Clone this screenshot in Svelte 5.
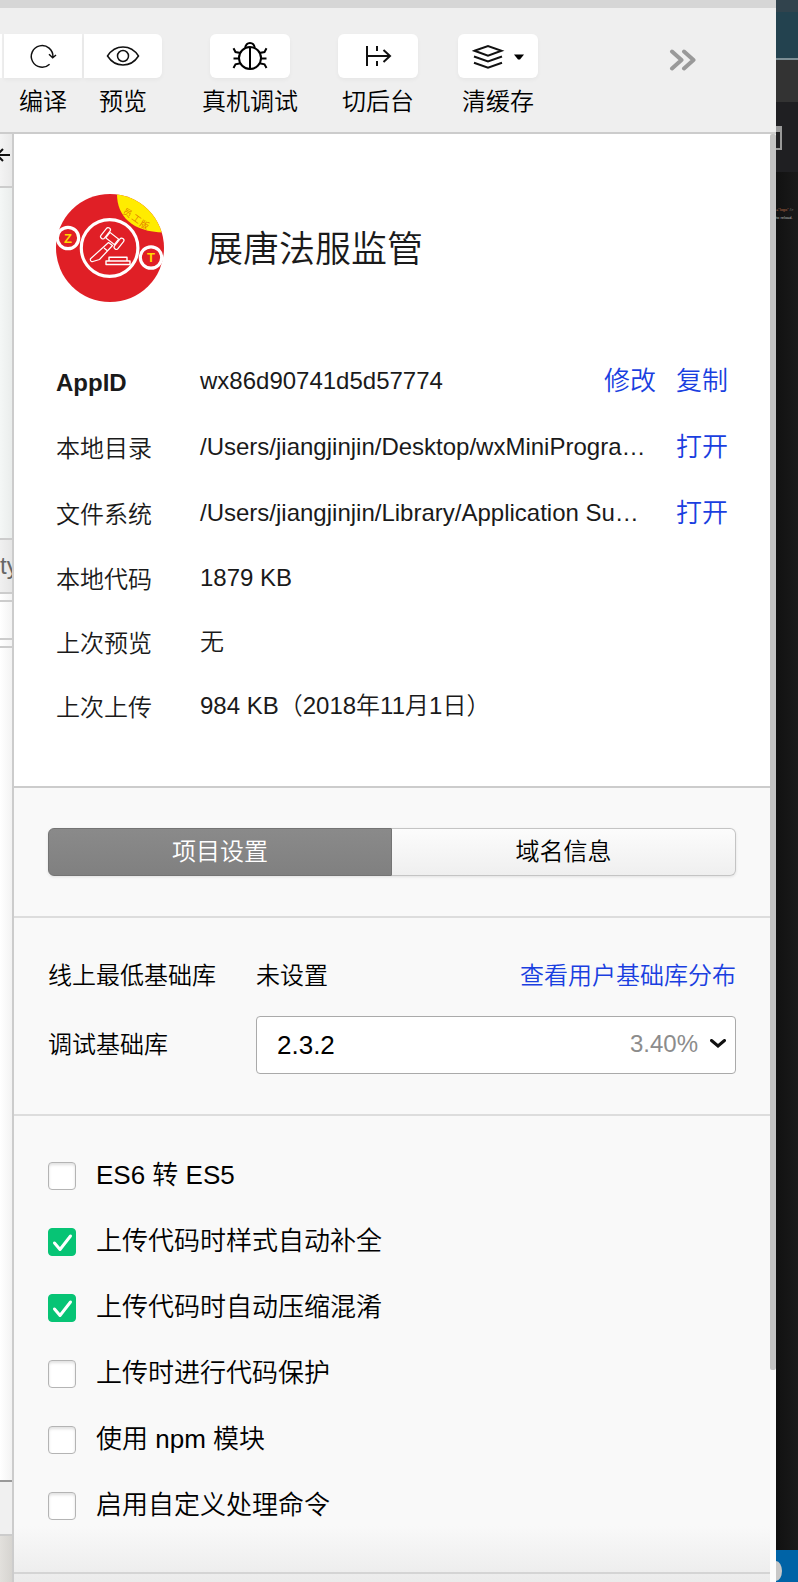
<script>
  let tab = $state('project');
  let library = $state('2.3.2');

  const info = [
    { label: 'AppID', value: 'wx86d90741d5d57774', actions: ['修改', '复制'], strong: true },
    { label: '本地目录', value: '/Users/jiangjinjin/Desktop/wxMiniProgra…', actions: ['打开'] },
    { label: '文件系统', value: '/Users/jiangjinjin/Library/Application Su…', actions: ['打开'] },
    { label: '本地代码', value: '1879 KB', actions: [] },
    { label: '上次预览', value: '无', actions: [] },
    { label: '上次上传', value: '984 KB（2018年11月1日）', actions: [] }
  ];

  let options = $state([
    { label: 'ES6 转 ES5', checked: false },
    { label: '上传代码时样式自动补全', checked: true },
    { label: '上传代码时自动压缩混淆', checked: true },
    { label: '上传时进行代码保护', checked: false },
    { label: '使用 npm 模块', checked: false },
    { label: '启用自定义处理命令', checked: false }
  ]);
</script>

<div class="screen">
  <div class="window">
    <header class="toolbar">
      <div class="sliver"></div>
      <div class="tool narrow">
        <button class="first" aria-labelledby="t-compile">
          <svg width="28" height="28" viewBox="0 0 28 28"><path d="M20.6 22.2A10.8 10.8 0 1 1 23.9 15M20 12.2l3.7 3.6 3.3-2.8" /></svg>
        </button>
        <span id="t-compile">编译</span>
      </div>
      <div class="tool narrow joined">
        <button class="last" aria-labelledby="t-preview">
          <svg width="34" height="24" viewBox="0 0 34 24"><path d="M1.5 12C6 5 11.500 3 17 3s11 2 15.500 9C28 19 22.500 21 17 21S6 19 1.500 12z" /><circle cx="17" cy="12" r="5.500" /></svg>
        </button>
        <span id="t-preview">预览</span>
      </div>
      <div class="tool gap-wide">
        <button aria-labelledby="t-debug">
          <svg class="bug" width="36" height="32" viewBox="0 0 36 32"><circle cx="18" cy="18" r="11" /><path d="M18 7v22M13.300 8.500C13.300 1 22.700 1 22.700 8.500M1.500 8.300l2 3.700L8.500 13M34.500 8.300l-2 3.700-5 1M1.500 18.500H7M29 18.500h5.500M1.500 28l2-3.700 5-1M34.500 28l-2-3.700-5-1" /></svg>
        </button>
        <span id="t-debug">真机调试</span>
      </div>
      <div class="tool gap-wide">
        <button aria-labelledby="t-background">
          <svg class="bold" width="28" height="24" viewBox="0 0 28 24"><path d="M3 2v20M3 12h23M13 2v5M13 17v5M19.500 6l6.500 6-6.500 6" /></svg>
        </button>
        <span id="t-background">切后台</span>
      </div>
      <div class="tool gap-mid">
        <button aria-labelledby="t-cache">
          <svg class="bold" width="52" height="28" viewBox="0 0 52 28"><path d="M2.500 8.800L16 4l13.500 4.800L16 13.800zM2 14.500l14 5 14-5M2 20.800l14 5 14-5" /><path class="solid" d="M42 12.500h10l-4 5h-2z" /></svg>
        </button>
        <span id="t-cache">清缓存</span>
      </div>
      <button class="more" aria-label="更多">
        <svg width="28" height="22" viewBox="0 0 28 22"><path d="M3 2.500L12.500 11 3 19.500M15 2.500L24.500 11 15 19.500" /></svg>
      </button>
    </header>

    <div class="body">
      <aside class="behind">
        <div class="b-back">
          <svg width="10" height="14" viewBox="0 0 10 14"><path d="M10 7H-3M3 1l-6 6 6 6" /></svg>
        </div>
        <div class="b-preview"></div>
        <div class="b-tab">ty</div>
        <div class="b-thin"></div>
        <div class="b-input"></div>
        <div class="b-thin"></div>
        <div class="b-list"></div>
        <div class="b-row"></div>
        <div class="b-foot"></div>
      </aside>

      <main class="panel">
        <section class="info">
          <div class="app">
            <svg class="logo" width="108" height="108" viewBox="0 0 108 108" aria-hidden="true">
              <defs><clipPath id="disc"><circle cx="54" cy="54" r="54" /></clipPath></defs>
              <g clip-path="url(#disc)">
                <rect width="108" height="108" fill="#e01f26" />
                <path d="M61 0C61 22 76 38 108 38.500V0z" fill="#ffec00" />
              </g>
              <g class="badge">
                <text transform="translate(71.500 19) rotate(28)" y="3">员</text>
                <text transform="translate(80.500 25) rotate(36)" y="3">工</text>
                <text transform="translate(88.500 31) rotate(28)" y="3">版</text>
              </g>
              <g fill="#e01f26" stroke="#fff" stroke-width="3.200">
                <circle cx="53.600" cy="54" r="28.300" />
                <circle cx="12" cy="44" r="10.700" /><circle cx="95" cy="63.500" r="10.700" />
              </g>
              <g class="letter"><text x="12" y="48.500">Z</text><text x="95" y="68">T</text></g>
              <g fill="none" stroke="#fff" stroke-width="1.200" stroke-linejoin="round">
                <path d="M52.500 48.500l4 3L43.500 65.500 36 67.800q-2.200-1-1.500-3zM48 54l4 3.200" />
                <rect x="-5.500" y="-3.500" width="11" height="7" transform="translate(56.200 44.500) rotate(38)" />
                <rect x="-2.200" y="-6.500" width="4.400" height="13" rx="2" transform="translate(49.500 39.300) rotate(38)" />
                <rect x="-2.200" y="-6.500" width="4.400" height="13" rx="2" transform="translate(63 49.800) rotate(38)" />
                <path d="M50 70.500h24V67H50zM53 67v-3.800h18V67" stroke-width="1.400" />
              </g>
            </svg>
            <h1>展唐法服监管</h1>
          </div>
          <dl>
            {#each info as row}
              <div class="row" class:linked={row.actions.length}>
                <dt class:strong={row.strong}>{row.label}</dt>
                <dd>{row.value}</dd>
                {#if row.actions.length}
                  <div class="actions">
                    {#each row.actions as action}<a href="#{action}">{action}</a>{/each}
                  </div>
                {/if}
              </div>
            {/each}
          </dl>
        </section>

        <section class="tabs">
          <div class="segmented" role="tablist">
            <button role="tab" aria-selected={tab === 'project'} class:active={tab === 'project'} onclick={() => (tab = 'project')}>项目设置</button>
            <button role="tab" aria-selected={tab === 'domain'} class:active={tab === 'domain'} onclick={() => (tab = 'domain')}>域名信息</button>
          </div>
        </section>

        <section class="library">
          <div class="field first-field">
            <span class="name">线上最低基础库</span>
            <span class="current">未设置</span>
            <a href="#stats">查看用户基础库分布</a>
          </div>
          <div class="field">
            <label class="name" for="lib">调试基础库</label>
            <div class="select">
              <select id="lib" bind:value={library}><option>2.3.2</option></select>
              <span class="share">3.40%
                <svg width="16" height="10" viewBox="0 0 16 10"><path d="M1.500 1.500L8 7l6.500-5.500" /></svg>
              </span>
            </div>
          </div>
        </section>

        <section class="options">
          {#each options as option}
            <label><input type="checkbox" bind:checked={option.checked} /><span>{option.label}</span></label>
          {/each}
        </section>
        <section class="rest"></section>
      </main>

      <div class="scrollbar"><div class="thumb"></div></div>
    </div>
  </div>

  <aside class="editor">
    <div class="e-top"></div>
    <div class="e-title"></div>
    <div class="e-bar"></div>
    <div class="e-tabs"><div class="e-icon"></div></div>
    <div class="e-code"><span><i>="logo"</i> /&gt;</span><span class="plain">to reload.</span></div>
    <div class="e-status"><div class="e-dot"></div></div>
  </aside>
</div>

<style>
  :global(body) { margin: 0; }
  .screen {
    display: flex;
    min-height: 100vh;
    font-family: "Liberation Sans", "Noto Sans CJK SC", sans-serif;
    font-size: 24px;
    line-height: 36px;
    font-weight: 350;
    color: #000;
    background: #f9f9f9;
  }
  .screen *, .screen *::before { box-sizing: border-box; }
  button, select, input { font: inherit; color: inherit; margin: 0; }
  button { padding: 0; border: 0; cursor: pointer; }
  a { color: #1a3fe0; text-decoration: none; }
  svg { display: block; fill: none; stroke: #111; stroke-width: 1.5; }

  .window { flex: 1; min-width: 0; display: flex; flex-direction: column; }
  .toolbar {
    display: flex;
    align-items: flex-start;
    height: 134px;
    padding-top: 26px;
    padding-right: 79px;
    background: #efefef;
    border-top: 8px solid #d6d6d6;
    border-bottom: 2px solid #ccc;
  }
  .sliver { width: 2px; height: 44px; margin-right: 2px; background: #fff; }
  .tool { display: flex; flex-direction: column; align-items: center; gap: 6px; width: 80px; white-space: nowrap; }
  .tool button {
    display: flex;
    align-items: center;
    justify-content: center;
    width: 100%;
    height: 44px;
    border-radius: 6px;
    background: #fff;
    box-shadow: 0 2px 4px rgba(0, 0, 0, 0.04);
  }
  .tool.narrow { width: 78px; }
  .tool button.first { border-radius: 0; }
  .tool button.last { border-radius: 0 6px 6px 0; }
  .joined { margin-left: 2px; }
  .gap-wide { margin-left: 48px; }
  .gap-mid { margin-left: 40px; }
  .bold { stroke-width: 2; }
  .bug { stroke: #000; stroke-width: 2; }
  .solid { fill: #000; stroke: none; }
  .more { margin: 15px 0 0 auto; background: none; }
  .more svg { stroke: #999; stroke-width: 4; stroke-linecap: round; stroke-linejoin: round; }

  .body { flex: 1; display: flex; }
  .behind {
    width: 14px;
    flex: none;
    display: flex;
    flex-direction: column;
    overflow: hidden;
    border-right: 2px solid #ccc;
    background: linear-gradient(90deg, #fff, #f3f3f3);
  }
  .behind div { border-bottom: 2px solid #ccc; }
  .b-back { height: 54px; padding-top: 14px; background: linear-gradient(90deg, #f3f3f3, #e9e9e9); }
  .b-back svg { stroke: #111; stroke-width: 2; }
  .b-preview { height: 352px; background: linear-gradient(90deg, #f4f7f6, #eaedec); }
  .b-tab { height: 54px; padding-top: 8px; line-height: 36px; color: #666; background: linear-gradient(90deg, #f0f0f0, #e6e6e6); }
  .b-thin { height: 8px; }
  .b-input { height: 38px; }
  .behind .b-list { flex: 1; border-color: #999; }
  .b-row { height: 54px; background: #f0f0f0; }
  .behind .b-foot { height: 46px; border: 0; background: linear-gradient(90deg, #e2e0dc, #d6d4d0); }

  .panel { flex: 1; min-width: 0; background: linear-gradient(to top, #ebebeb, #f9f9f9 56px); }
  .info { padding: 60px 42px 48px; background: #fff; border-bottom: 2px solid #ccc; color: #1a1a1a; }
  .app { display: flex; align-items: center; gap: 43px; margin-bottom: 46px; }
  .logo { flex: none; stroke: none; }
  .badge { fill: #e07000; font-size: 9px; text-anchor: middle; }
  .letter { fill: #ffd800; font-size: 13px; font-weight: 700; text-anchor: middle; }
  h1 { margin: 0; padding-top: 4px; font-size: 36px; line-height: 54px; font-weight: 350; }
  dl { margin: 0; }
  .row { display: flex; align-items: center; height: 64px; }
  .row.linked { height: 66px; }
  dt { width: 144px; flex: none; padding-top: 4px; }
  dt.strong { font-weight: 700; }
  dd { flex: 1; min-width: 0; margin: 0; white-space: nowrap; }
  .actions { display: flex; gap: 20px; padding-left: 16px; font-size: 26px; }

  .tabs { padding: 40px 34px; border-bottom: 2px solid #ddd; }
  .segmented { display: grid; grid-template-columns: 1fr 1fr; height: 48px; border-radius: 6px; box-shadow: 0 1px 3px rgba(0, 0, 0, 0.1); }
  .segmented button { border: 1px solid #c4c4c4; border-left: 0; background: linear-gradient(#fcfcfc, #efefef); border-radius: 0 6px 6px 0; }
  .segmented button:first-child { border-radius: 6px 0 0 6px; }
  .segmented button.active { border: 1px solid #747474; background: linear-gradient(#8a8a8a, #808080); color: #fff; }

  .library { padding: 40px 34px; border-bottom: 2px solid #ddd; }
  .field { display: flex; align-items: center; }
  .first-field { margin-bottom: 22px; }
  .name { width: 208px; flex: none; }
  .current { flex: 1; }
  .select { position: relative; flex: 1; }
  select {
    display: block;
    width: 100%;
    height: 58px;
    padding: 0 20px;
    border: 1px solid #aaa;
    border-radius: 4px;
    background: #fff;
    appearance: none;
    font-size: 26px;
  }
  .share { position: absolute; top: 10px; right: 10px; display: flex; align-items: center; gap: 12px; color: #8c8c8c; pointer-events: none; }
  .share svg { stroke: #111; stroke-width: 3; stroke-linecap: round; }

  .options { padding: 27px 34px 33px; border-bottom: 2px solid #d4d4d4; font-size: 26px; }
  .options label { display: flex; align-items: center; gap: 20px; height: 66px; }
  .options span { padding-bottom: 2px; }
  input {
    appearance: none;
    width: 28px;
    height: 28px;
    flex: none;
    border: 1px solid #b4b4b4;
    border-radius: 4px;
    background: #fff;
    box-shadow: inset 0 2px 3px rgba(0, 0, 0, 0.12);
  }
  input:checked {
    border-color: #07c475;
    box-shadow: none;
    background: #07c475 url("data:image/svg+xml,%3Csvg xmlns='http://www.w3.org/2000/svg' viewBox='0 0 26 26'%3E%3Cpath d='M5.500 14l5.500 6.500L21.500 7' fill='none' stroke='white' stroke-width='3' stroke-linecap='round' stroke-linejoin='round'/%3E%3C/svg%3E");
  }
  .rest { height: 8px; }

  .scrollbar { width: 6px; flex: none; display: grid; grid-template-rows: 35fr 6fr; background: #fcfcfc; }
  .thumb { background: #c3c3c3; border-radius: 2px; }

  .editor { width: 22px; flex: none; display: flex; flex-direction: column; overflow: hidden; background: linear-gradient(90deg, #111, #1a1a1a); }
  .e-top { height: 12px; background: #31434d; }
  .e-title { height: 48px; background: #23424f; border-bottom: 2px solid #7d8f96; }
  .e-bar { height: 42px; background: #333; }
  .e-tabs { height: 70px; padding-top: 24px; background: #1f1f22; }
  .e-icon { width: 6px; height: 24px; border: solid #999; border-width: 6px 2px 2px 0; }
  .e-code { flex: 1; display: flex; flex-direction: column; padding-top: 34px; font-size: 4px; line-height: 8px; color: #888; white-space: nowrap; }
  .e-code i { font-style: normal; color: #b5694a; }
  .e-code .plain { color: #bbb; }
  .e-status { height: 32px; padding-top: 11px; background: #0063a6; }
  .e-dot { width: 6px; height: 20px; border-radius: 0 6px 6px 0 / 0 10px 10px 0; background: #c8c8c8; }
</style>
